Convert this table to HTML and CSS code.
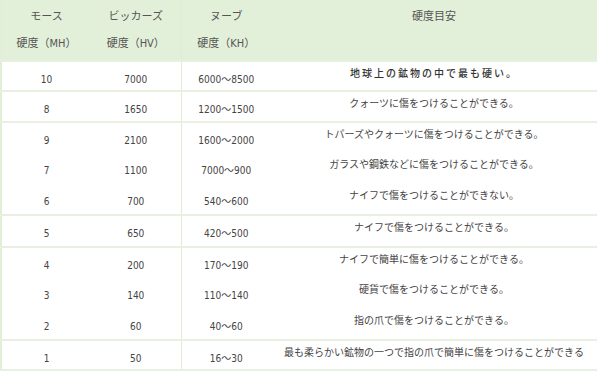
FILE: index.html
```html
<!DOCTYPE html>
<html lang="ja">
<head>
<meta charset="utf-8">
<link rel="stylesheet" href="styles.css">
</head>
<body>
<table class="hardness">
  <colgroup>
    <col class="c-num"><col class="c-num"><col class="c-num"><col class="c-desc">
  </colgroup>
  <thead>
    <tr>
      <th class="h-cell"><div class="h1">モース</div><div class="h2">硬度（MH）</div></th>
      <th class="h-cell"><div class="h1">ビッカーズ</div><div class="h2">硬度（HV）</div></th>
      <th class="h-cell sep"><div class="h1">ヌーブ</div><div class="h2">硬度（KH）</div></th>
      <th class="h-cell"><div class="h1">硬度目安</div><div class="h2">&nbsp;</div></th>
    </tr>
  </thead>
  <tbody class="grp">
    <tr class="r30"><td class="num">10</td><td class="num">7000</td><td class="num sep">6000～8500</td><td class="desc strong">地球上の鉱物の中で最も硬い。</td></tr>
  </tbody>
  <tbody class="grp">
    <tr class="r31"><td class="num">8</td><td class="num">1650</td><td class="num sep">1200～1500</td><td class="desc">クォーツに傷をつけることができる。</td></tr>
  </tbody>
  <tbody class="grp">
    <tr class="r31"><td class="num">9</td><td class="num">2100</td><td class="num sep">1600～2000</td><td class="desc">トパーズやクォーツに傷をつけることができる。</td></tr>
    <tr class="r31"><td class="num">7</td><td class="num">1100</td><td class="num sep">7000～900</td><td class="desc">ガラスや鋼鉄などに傷をつけることができる。</td></tr>
    <tr class="r31"><td class="num">6</td><td class="num">700</td><td class="num sep">540～600</td><td class="desc">ナイフで傷をつけることができない。</td></tr>
  </tbody>
  <tbody class="grp">
    <tr class="r32"><td class="num">5</td><td class="num">650</td><td class="num sep">420～500</td><td class="desc">ナイフで傷をつけることができる。</td></tr>
  </tbody>
  <tbody class="grp">
    <tr class="r31"><td class="num">4</td><td class="num">200</td><td class="num sep">170～190</td><td class="desc">ナイフで簡単に傷をつけることができる。</td></tr>
    <tr class="r31"><td class="num">3</td><td class="num">140</td><td class="num sep">110～140</td><td class="desc">硬貨で傷をつけることができる。</td></tr>
    <tr class="r31"><td class="num">2</td><td class="num">60</td><td class="num sep">40～60</td><td class="desc">指の爪で傷をつけることができる。</td></tr>
  </tbody>
  <tbody class="grp last">
    <tr class="r30"><td class="num">1</td><td class="num">50</td><td class="num sep">16～30</td><td class="desc">最も柔らかい鉱物の一つで指の爪で簡単に傷をつけることができる</td></tr>
  </tbody>
</table>
</body>
</html>
```

FILE: styles.css
```css
html, body {
  margin: 0;
  padding: 0;
  background: #ffffff;
}

body {
  font-family: "DejaVu Sans Condensed", "DejaVu Sans", "Noto Sans CJK JP", sans-serif;
  color: #4a4a4a;
}

.hardness {
  width: 597px;
  border-collapse: collapse;
  table-layout: fixed;
  border-left: 2px solid #e3eed9;
}

.c-num { width: 90px; }
.c-desc { width: auto; }

thead tr {
  background: #e2efd9;
  height: 61px;
}

.h-cell {
  font-weight: normal;
  font-size: 11px;
  color: #555555;
  text-align: center;
  vertical-align: top;
  padding: 0;
  font-family: "DejaVu Sans Condensed", "Noto Sans CJK JP", sans-serif;
}

.h1 {
  line-height: 14px;
  padding-top: 10px;
}

.h2 {
  line-height: 14px;
  padding-top: 13px;
}

.sep {
  border-left: 1px solid #dfebd3;
}

.grp {
  border-top: 2px solid #e8f0df;
}

.grp.last {
  border-bottom: 2px solid #e8f0df;
}

.r30 { height: 30px; }
.r31 { height: 31px; }
.r32 { height: 32px; }

.num {
  font-size: 10px;
  line-height: 14px;
  text-align: center;
  vertical-align: top;
  padding: 11px 0 0 0;
  color: #444444;
}

.desc {
  font-family: "Noto Sans CJK JP", sans-serif;
  font-size: 10px;
  line-height: 14px;
  text-align: center;
  vertical-align: top;
  padding: 4px 0 0 0;
  color: #444444;
  white-space: nowrap;
}

.desc.strong {
  font-weight: 500;
  letter-spacing: 2px;
  color: #333333;
}
```
